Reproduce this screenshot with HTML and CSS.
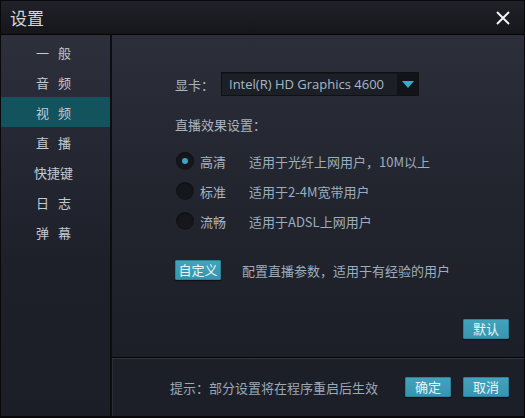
FILE: index.html
```html
<!DOCTYPE html>
<html lang="zh">
<head>
<meta charset="utf-8">
<title>设置</title>
<link rel="stylesheet" href="styles.css">
</head>
<body>
<div class="window">
  <div class="titlebar">
    <span class="title">设置</span>
    <svg class="close" width="16" height="16" viewBox="0 0 16 16"><path d="M2 2L14 14M14 2L2 14" stroke="#f2f2f2" stroke-width="2" fill="none"/></svg>
  </div>
  <div class="body">
    <ul class="sidebar">
      <li class="nav"><span>一</span><span>般</span></li>
      <li class="nav"><span>音</span><span>频</span></li>
      <li class="nav active"><span>视</span><span>频</span></li>
      <li class="nav"><span>直</span><span>播</span></li>
      <li class="nav"><span>快捷键</span></li>
      <li class="nav"><span>日</span><span>志</span></li>
      <li class="nav"><span>弹</span><span>幕</span></li>
    </ul>
    <div class="content">
      <div class="main">
        <div class="row card-row">
          <span class="label">显卡：</span>
          <div class="select">
            <span class="select-text">Intel(R) HD Graphics 4600</span>
            <span class="select-arrow"><svg width="12" height="8" viewBox="0 0 12 8"><path d="M0 0H12L6 7Z" fill="#3aa9cb"/></svg></span>
          </div>
        </div>
        <div class="section-title">直播效果设置：</div>
        <div class="radios">
          <div class="radio-row"><span class="radio checked"></span><span class="opt">高清</span><span class="desc">适用于光纤上网用户，10M以上</span></div>
          <div class="radio-row"><span class="radio"></span><span class="opt">标准</span><span class="desc">适用于2-4M宽带用户</span></div>
          <div class="radio-row"><span class="radio"></span><span class="opt">流畅</span><span class="desc">适用于ADSL上网用户</span></div>
        </div>
        <div class="custom-row">
          <button class="btn btn-custom">自定义</button>
          <span class="desc">配置直播参数，适用于有经验的用户</span>
        </div>
        <div class="default-row"><button class="btn">默认</button></div>
      </div>
      <div class="footer">
        <span class="hint">提示：部分设置将在程序重启后生效</span>
        <button class="btn">确定</button>
        <button class="btn">取消</button>
      </div>
    </div>
  </div>
</div>
</body>
</html>
```
FILE: styles.css
```css
* { box-sizing: border-box; }
html, body { margin: 0; padding: 0; background: #0b0b0d; }
body {
  font-family: "Noto Sans CJK SC", "Open Sans", "Liberation Sans", sans-serif;
  font-size: 13px;
}
.window {
  width: 525px;
  height: 418px;
  border: 1px solid #09090b;
  border-bottom-width: 2px;
  display: flex;
  flex-direction: column;
  background: #1b1e26;
}
.titlebar {
  height: 34px;
  flex: none;
  background: linear-gradient(#212229, #15161a);
  border-bottom: 1px solid #050506;
  display: flex;
  align-items: center;
  justify-content: space-between;
  padding: 0 13px 0 9px;
}
.title {
  color: #d2d6da;
  font-size: 17px;
  line-height: 20px;
}
.close { display: block; }
.body {
  flex: 1;
  display: flex;
  min-height: 0;
}
.sidebar {
  list-style: none;
  margin: 0;
  padding: 2px 0 0;
  width: 111px;
  flex: none;
  background: linear-gradient(#2d303b, #1d2029 60%, #1b1e26);
  border-right: 2px solid #0c0d10;
}
.nav {
  height: 30px;
  display: flex;
  align-items: center;
  justify-content: center;
  gap: 9px;
  padding-right: 4px;
  color: #c2cad3;
  font-size: 13px;
}
.nav.active { background: #13535d; }
.content {
  flex: 1;
  display: flex;
  flex-direction: column;
  min-width: 0;
}
.main {
  height: 322px;
  display: flex;
  flex-direction: column;
  padding: 37px 15px 18px 63px;
  background: linear-gradient(#2c2f3a, #22252e 50%, #1c1f27);
}
.card-row {
  display: flex;
  align-items: center;
  height: 24px;
}
.label { color: #aab4be; width: 46px; }
.select {
  width: 198px;
  height: 24px;
  display: flex;
  background: #1c1f26;
  border: 1px solid #101115;
  box-shadow: inset 0 1px 0 #15171c;
}
.select-text {
  flex: 1;
  padding-left: 7px;
  line-height: 22px;
  color: #a7b8c9;
  font-family: "Open Sans", "Noto Sans", sans-serif;
  font-size: 13px;
}
.select-arrow {
  width: 21px;
  background: #121419;
  display: flex;
  align-items: center;
  justify-content: center;
  padding-top: 1px;
}
.section-title {
  margin-top: 21px;
  line-height: 16px;
  color: #aab4be;
}
.radios {
  margin-top: 13px;
  display: flex;
  flex-direction: column;
}
.radio-row {
  height: 30px;
  display: flex;
  align-items: center;
}
.radio {
  width: 18px;
  height: 18px;
  border-radius: 50%;
  background: #16171c;
  box-shadow: 0 0 0 1px #262830, inset 0 1px 2px #0d0e11;
  display: flex;
  align-items: center;
  justify-content: center;
  margin-left: 1px;
}
.radio.checked::after {
  content: "";
  width: 6px;
  height: 6px;
  border-radius: 50%;
  background: #39a4c4;
}
.opt {
  margin-left: 6px;
  width: 49px;
  color: #a9b5c2;
}
.desc { color: #9cadbf; }
.custom-row {
  margin-top: 24px;
  display: flex;
  align-items: center;
}
.custom-row .desc { margin-left: 21px; }
.btn {
  font-family: inherit;
  font-size: 13px;
  height: 20px;
  width: 46px;
  padding: 0;
  line-height: 18px;
  color: #eaf5f8;
  background: linear-gradient(#42a3bc, #3895ad);
  border: 1px solid #2e8198;
  border-radius: 1px;
  box-shadow: 0 1px 1px #0f1014;
}
.btn-custom { width: 46px; }
.default-row {
  margin-top: auto;
  display: flex;
  justify-content: flex-end;
}
.footer {
  flex: 1;
  display: flex;
  align-items: center;
  gap: 12px;
  padding: 0 15px 0 58px;
  border-top: 1px solid #050507;
  box-shadow: inset 0 1px 0 #33363f, inset 1px 0 0 #2a2d35;
  background: #1c1f27;
}
.hint {
  flex: 1;
  color: #9aa8b8;
}
```
